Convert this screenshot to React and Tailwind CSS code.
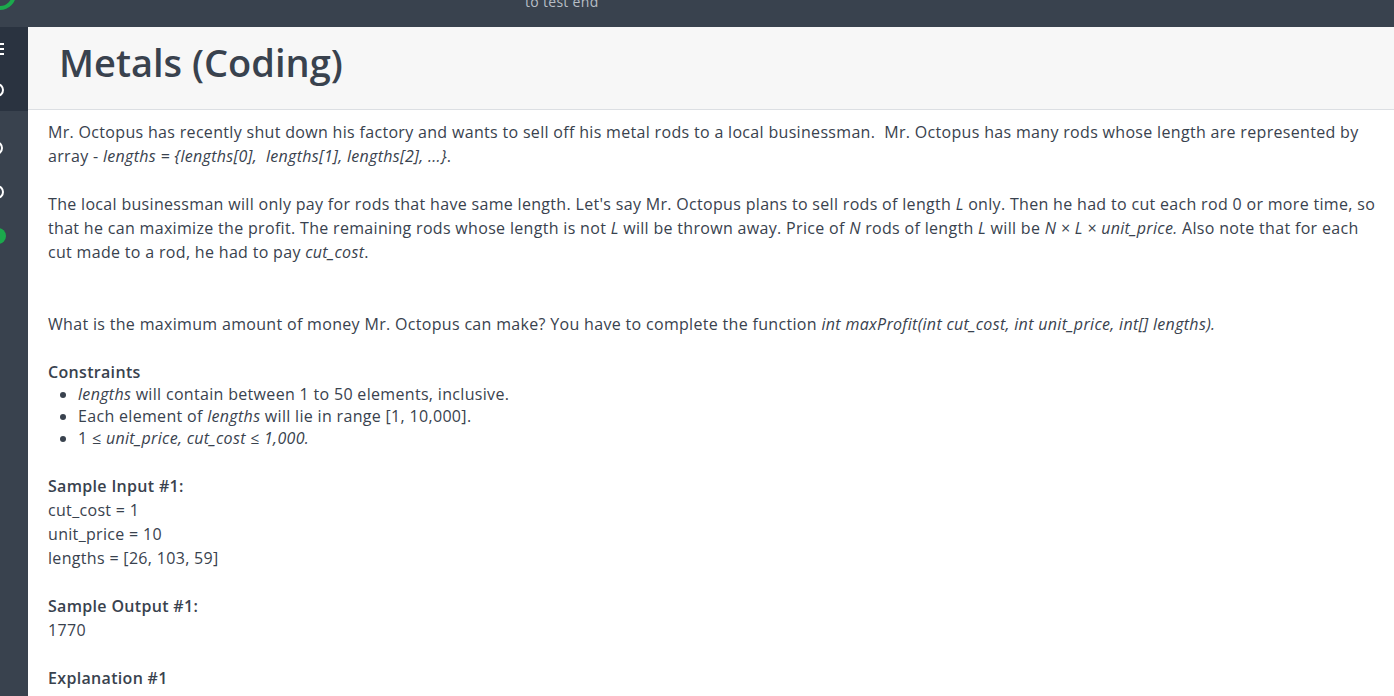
import React from "react";

const Sidebar = () => {
  return (
    <div className="w-[28px] shrink-0 bg-[#39424e] overflow-hidden flex flex-col">
      <div className="h-[84px] bg-[#2a3340] relative">
        {/* menu icon, mostly off screen */}
        <div className="absolute left-[-8px] top-[16px] flex flex-col gap-[3px]">
          <span className="block w-[12px] h-[2px] bg-white"></span>
          <span className="block w-[12px] h-[2px] bg-white"></span>
          <span className="block w-[12px] h-[2px] bg-white"></span>
        </div>
        <div className="absolute left-[-10px] top-[56px] w-[14px] h-[14px] rounded-full border-2 border-white"></div>
      </div>
      <div className="relative flex-1">
        <div className="absolute left-[-11px] top-[30px] w-[14px] h-[14px] rounded-full border-2 border-white"></div>
        <div className="absolute left-[-10px] top-[74px] w-[14px] h-[14px] rounded-full border-2 border-white"></div>
        <div className="absolute left-[-10px] top-[117px] w-[16px] h-[16px] rounded-full bg-[#1ba94c]"></div>
      </div>
    </div>
  );
};

const Problem = () => {
  return (
    <div className="pl-[20px] pr-[12px] pt-[10px] text-[16px] leading-[24px] tracking-[0.32px] text-[#39424e]">
      <p>
        Mr. Octopus has recently shut down his factory and wants to sell off his metal rods to a local businessman.&nbsp; Mr. Octopus has many rods whose length are represented by array - <em>lengths = {"{"}lengths[0],&nbsp; lengths[1], lengths[2], ...{"}"}</em>.
      </p>
      <p className="mt-[24px]">
        The local businessman will only pay for rods that have same length. Let's say Mr. Octopus plans to sell rods of length <em>L</em> only. Then he had to cut each rod 0 or more time, so that he can maximize the profit. The remaining rods whose length is not <em>L</em> will be thrown away. Price of <em>N</em> rods of length <em>L</em> will be <em className="font-medium">N × L × unit_price.</em> Also note that for each cut made to a rod, he had to pay <em className="font-medium">cut_cost</em>.
      </p>
      <p className="mt-[48px]">
        What is the maximum amount of money Mr. Octopus can make? You have to complete the function <em className="font-medium">int maxProfit(int cut_cost, int unit_price, int[] lengths).</em>
      </p>
      <h4 className="mt-[24px] font-semibold">Constraints</h4>
      <ul className="list-disc pl-[30px] leading-[22px] mt-[-1px]">
        <li><em>lengths</em> will contain between 1 to 50 elements, inclusive.</li>
        <li>Each element of <em>lengths</em> will lie in range [1, 10,000].</li>
        <li>1 ≤ <em className="font-medium">unit_price, cut_cost ≤ 1,000.</em></li>
      </ul>
      <h4 className="mt-[25px] font-semibold">Sample Input #1:</h4>
      <p>cut_cost = 1</p>
      <p>unit_price = 10</p>
      <p>lengths = [26, 103, 59]</p>
      <h4 className="mt-[24px] font-semibold">Sample Output #1:</h4>
      <p>1770</p>
      <h4 className="mt-[24px] font-semibold">Explanation #1</h4>
      <p>
        If we cut the rods into pieces of length 6, we will get 4 + 17 + 9 = 30 pieces. The total number of cuts will be 4 + 17 + 9 = 30 and cut cost
      </p>
    </div>
  );
};

export default function App() {
  return (
    <div className="w-[1394px] h-[696px] overflow-hidden bg-white flex flex-col font-['Open_Sans',sans-serif]">
      <div className="h-[27px] shrink-0 bg-[#39424e] relative overflow-hidden">
        <div className="absolute left-[-16px] top-[-22px] w-[32px] h-[32px] rounded-full border-[4px] border-[#1ba94c]"></div>
        <div className="absolute left-[525px] top-[-9px] text-[14px] text-[#b7bec6] tracking-[0.3px]">to test end</div>
      </div>
      <div className="flex flex-1 min-h-0">
        <Sidebar />
        <div className="flex-1 min-w-0 flex flex-col">
          <div className="h-[83px] shrink-0 bg-[#f7f7f7] border-b border-[#dcdfe3] flex items-start pt-[16px] px-[31px]">
            <h1 className="text-[38px] font-semibold text-[#39424e] leading-none">Metals (Coding)</h1>
          </div>
          <Problem />
        </div>
      </div>
    </div>
  );
}
